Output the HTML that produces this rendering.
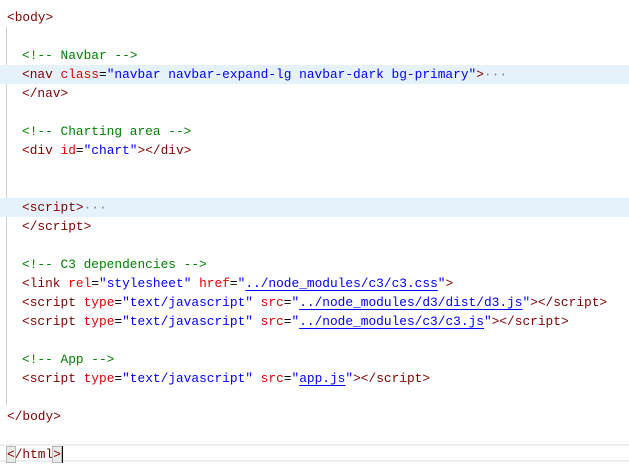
<!DOCTYPE html>
<html><head><style>
body{margin:0;width:629px;height:473px;background:#fff;overflow:hidden;position:relative;font-family:"Liberation Mono",monospace;font-size:12.83px;}
.l{position:absolute;left:0;width:629px;height:19px;line-height:19px;white-space:pre;}
.t{color:#800000}.a{color:#e50000}.s{color:#0000ff}.c{color:#008000}.k{color:#000}
.u{text-decoration:underline;text-underline-offset:3px}
.hl{background:#e5f1fb}
.dots{color:#7a8aa0}
.g{position:absolute;left:6px;top:27px;width:1px;height:378px;background:#d0d0d0}
.cur{position:absolute;left:0;top:444px;width:629px;height:18px;border-top:2px solid #eeeeee;border-bottom:2px solid #eeeeee;box-sizing:border-box}
.bx{outline:1px solid #b8b8b8;background:#e8ece8}
</style></head><body>
<div class="g"></div>
<div class="cur"></div>
<div class="l" style="top:8px;left:7px"><span class="t">&lt;body&gt;</span></div>
<div class="l" style="top:46px;left:22px"><span class="c">&lt;!-- Navbar --&gt;</span></div>
<div class="l hl" style="top:65px;padding-left:22px"><span class="t">&lt;nav</span> <span class="a">class</span><span class="k">=</span><span class="s">"navbar navbar-expand-lg navbar-dark bg-primary"</span><span class="t">&gt;</span><span class="dots">···</span></div>
<div class="l" style="top:84px;left:22px"><span class="t">&lt;/nav&gt;</span></div>
<div class="l" style="top:122px;left:22px"><span class="c">&lt;!-- Charting area --&gt;</span></div>
<div class="l" style="top:141px;left:22px"><span class="t">&lt;div</span> <span class="a">id</span><span class="k">=</span><span class="s">"chart"</span><span class="t">&gt;&lt;/div&gt;</span></div>
<div class="l hl" style="top:198px;padding-left:22px"><span class="t">&lt;script&gt;</span><span class="dots">···</span></div>
<div class="l" style="top:217px;left:22px"><span class="t">&lt;/script&gt;</span></div>
<div class="l" style="top:255px;left:22px"><span class="c">&lt;!-- C3 dependencies --&gt;</span></div>
<div class="l" style="top:274px;left:22px"><span class="t">&lt;link</span> <span class="a">rel</span><span class="k">=</span><span class="s">"stylesheet"</span> <span class="a">href</span><span class="k">=</span><span class="s">"<span class="u">../node_modules/c3/c3.css</span>"</span><span class="t">&gt;</span></div>
<div class="l" style="top:293px;left:22px"><span class="t">&lt;script</span> <span class="a">type</span><span class="k">=</span><span class="s">"text/javascript"</span> <span class="a">src</span><span class="k">=</span><span class="s">"<span class="u">../node_modules/d3/dist/d3.js</span>"</span><span class="t">&gt;&lt;/script&gt;</span></div>
<div class="l" style="top:312px;left:22px"><span class="t">&lt;script</span> <span class="a">type</span><span class="k">=</span><span class="s">"text/javascript"</span> <span class="a">src</span><span class="k">=</span><span class="s">"<span class="u">../node_modules/c3/c3.js</span>"</span><span class="t">&gt;&lt;/script&gt;</span></div>
<div class="l" style="top:350px;left:22px"><span class="c">&lt;!-- App --&gt;</span></div>
<div class="l" style="top:369px;left:22px"><span class="t">&lt;script</span> <span class="a">type</span><span class="k">=</span><span class="s">"text/javascript"</span> <span class="a">src</span><span class="k">=</span><span class="s">"<span class="u">app.js</span>"</span><span class="t">&gt;&lt;/script&gt;</span></div>
<div class="l" style="top:407px;left:7px"><span class="t">&lt;/body&gt;</span></div>
<div class="l" style="top:445px;left:7px"><span class="t"><span class="bx">&lt;</span>/html<span class="bx">&gt;</span></span><span style="display:inline-block;width:2px;height:17px;background:#000;vertical-align:middle"></span></div>
</body></html>
